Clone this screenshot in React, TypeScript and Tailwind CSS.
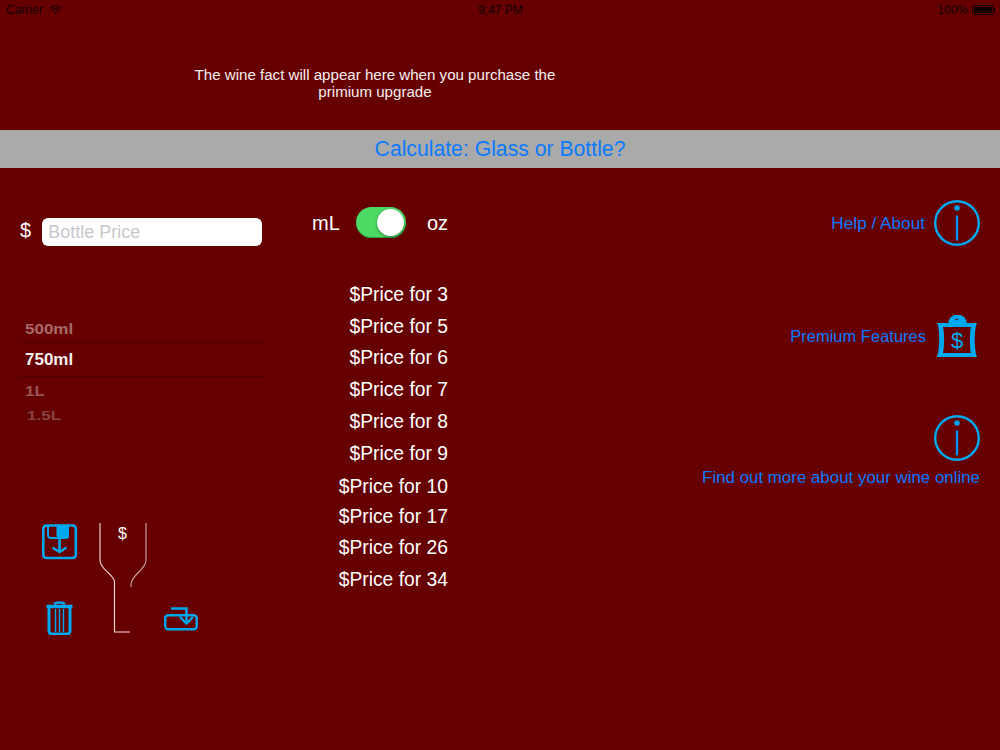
import { useState } from 'react';

const priceRows = [
  { label: '$Price for 3', height: 'h-[32px]' },
  { label: '$Price for 5', height: 'h-[32px]' },
  { label: '$Price for 6', height: 'h-[31px]' },
  { label: '$Price for 7', height: 'h-[32px]' },
  { label: '$Price for 8', height: 'h-[32px]' },
  { label: '$Price for 9', height: 'h-[33px]' },
  { label: '$Price for 10', height: 'h-[32px]' },
  { label: '$Price for 17', height: 'h-[29px]' },
  { label: '$Price for 26', height: 'h-[32px]' },
  { label: '$Price for 34', height: 'h-[33px]' },
];

const WifiIcon = () => (
  <svg width="13" height="10" viewBox="0 0 13 10" fill="none" stroke="#120000" strokeWidth="1.4">
    <path d="M0.8 3.4a8.2 8.2 0 0 1 11.4 0" />
    <path d="M2.9 5.5a5.2 5.2 0 0 1 7.2 0" />
    <path d="M6.5 9.4 4.9 7.5a2.4 2.4 0 0 1 3.2 0z" fill="#120000" stroke="none" />
  </svg>
);

const InfoIcon = () => (
  <svg width="46" height="46" viewBox="0 0 46 46" fill="none" stroke="#00a9ef" strokeWidth="2.4">
    <circle cx="23" cy="23" r="21.8" />
    <circle cx="23" cy="8" r="2.8" fill="#00a0ef" stroke="none" />
    <path d="M23 15.500v25" stroke="#0090ef" strokeWidth="2.400" />
  </svg>
);

const PremiumIcon = () => (
  <svg width="40" height="43" viewBox="0 0 40 43" fill="none">
    <path d="M11 9a9.500 9.500 0 0 1 19 0z" fill="#00a9ef" />
    <path d="M18 5l3-1" stroke="#660000" strokeWidth="1" />
    <path
      fillRule="evenodd"
      d="M0 8h40c-3 6-3 26 0 34H0c3-8 3-28 0-34zm6 4c1.500 6 1.500 20 0 26h28c-1.500-6-1.500-20 0-26z"
      fill="#00a9ef"
    />
    <text x="20" y="33" textAnchor="middle" fill="#00a9ef" fontSize="22" fontFamily="Liberation Sans, sans-serif">
      $
    </text>
  </svg>
);

const SaveIcon = () => (
  <svg width="36" height="36" viewBox="0 0 36 36" fill="none" stroke="#00a9ef" strokeWidth="2.6">
    <rect x="1.300" y="1.500" width="32.500" height="32.500" rx="3" />
    <path d="M6 2v9a3 3 0 0 0 3 3h15a2 2 0 0 0 2-2V2" strokeWidth="2" />
    <path d="M14.500 2h11.500v10a1.500 1.500 0 0 1-1.500 1.500H16.500a2 2 0 0 1-2-2z" fill="#00a9ef" stroke="none" />
    <path d="M17.500 14v14M10.500 23.500l7 4.500 7-4.500" />
  </svg>
);

const TrashIcon = () => (
  <svg width="27" height="34" viewBox="0 0 27 34" fill="none" stroke="#00a9ef">
    <path d="M0.500 5.500h26" strokeWidth="3.500" />
    <path d="M8 3c2-2 9-2 11 0" strokeWidth="2.600" />
    <path d="M3 7v23a3 3 0 0 0 3 3h15a3 3 0 0 0 3-3V7" strokeWidth="3" />
    <path d="M9.500 8v23M13.500 8v23M17.500 8v23" strokeWidth="1.400" />
  </svg>
);

const TrayIcon = () => (
  <svg width="34" height="25" viewBox="0 0 34 25" fill="none" stroke="#00a9ef" strokeWidth="2.400">
    <rect x="1.200" y="9.200" width="31.500" height="14" rx="3" />
    <path d="M7 2.500h15.500v14" />
    <path d="M16 11l6.500 6.500 6.500-6.500" />
  </svg>
);

const GlassOutline = () => (
  <svg width="50" height="110" viewBox="0 0 50 110" fill="none" stroke="#f3dede" strokeWidth="1.100">
    <path d="M1 0v37c0 10 14 14 14.500 22v50H31" />
    <path d="M47 0v37c0 10-14 14-15 24v3" strokeOpacity="0.75" />
  </svg>
);

export default function App() {
  const [useOz, setUseOz] = useState(true);

  return (
    <div className="w-[1000px] h-[750px] overflow-hidden bg-[#660000] font-['Liberation_Sans',sans-serif]">
      {/* status bar */}
      <div className="h-5 pl-[6px] pr-[5px] grid grid-cols-3 items-center text-[12px] text-[#120000]">
        <div className="flex items-center gap-[6px]">
          <span>Carrier</span>
          <WifiIcon />
        </div>
        <div className="text-center">9:47 PM</div>
        <div className="flex items-center justify-end gap-[4px]">
          <span>100%</span>
          <div className="flex items-center">
            <div className="w-[22px] h-[10px] border border-[#120000] rounded-[2px] p-[1px]">
              <div className="w-full h-full bg-[#120000]" />
            </div>
            <div className="w-[1px] h-[4px] bg-[#120000]" />
          </div>
        </div>
      </div>

      {/* wine fact */}
      <div className="w-[750px] h-[110px] pt-[46px] text-center text-[15.100px] leading-[17px] text-[#f7eeee]">
        <p>The wine fact will appear here when you purchase the</p>
        <p>primium upgrade</p>
      </div>

      <div className="h-[38px] bg-[#aaaaaa] flex items-center justify-center text-[21.200px] text-[#0a7aff]">
        Calculate: Glass or Bottle?
      </div>

      <div className="flex">
        {/* left column */}
        <div className="w-[300px]">
          <div className="pt-[50px] pl-5 flex items-center gap-[11px]">
            <span className="text-[20px] leading-none text-white pb-[5px]">$</span>
            <input
              placeholder="Bottle Price"
              className="w-[220px] h-[28px] rounded-[6px] bg-white px-[6px] text-[18px] outline-none placeholder:text-[#c7c7cd]"
            />
          </div>

          <div className="mt-[71px] pl-[25px] w-[263px] font-bold text-[17px]">
            <div className="h-[25px] leading-[21px] text-[#a86a6a] scale-y-90 origin-bottom">500ml</div>
            <div className="h-[35px] leading-[33px] -ml-[5px] pl-[5px] border-y border-[#4a0000] text-[#f6eeee]">750ml</div>
            <div className="h-[29px] leading-[29px] text-[#9a5555] scale-y-90">1L</div>
            <div className="h-[20px] leading-[20px] pl-[2px] text-[#8a4242] scale-y-75">1.5L</div>
          </div>

          <div className="mt-[97px] pl-[42px] flex items-start">
            <div className="w-[57px] flex flex-col pt-[1px]">
              <SaveIcon />
              <div className="mt-[41px] pl-1">
                <TrashIcon />
              </div>
            </div>
            <div className="relative w-[65px]">
              <GlassOutline />
              <span className="absolute left-[19px] top-[-1px] text-[16px] text-white">$</span>
            </div>
            <div className="pt-[83px]">
              <TrayIcon />
            </div>
          </div>
        </div>

        {/* middle column */}
        <div className="w-[148px]">
          <div className="pt-[39px] pl-[12px] flex items-center text-[20px] text-white">
            <span>mL</span>
            <button
              onClick={() => setUseOz(!useOz)}
              className="ml-[16px] mr-[21px] w-[51px] h-[31px] rounded-full bg-[#4cd964] p-[2px] flex justify-end shadow-[inset_0_-1px_0_#2f9a44]"
            >
              <span className="w-[27px] h-[27px] rounded-full bg-white shadow-[0_1px_3px_rgba(0,0,0,0.4)]" />
            </button>
            <span>oz</span>
          </div>
          <div className="mt-[41px] flex flex-col items-end text-[19.300px] text-white">
            {priceRows.map((row) => (
              <div key={row.label} className={`${row.height} flex items-center whitespace-nowrap`}>
                {row.label}
              </div>
            ))}
          </div>
        </div>

        {/* right column */}
        <div className="flex-1 pr-5 flex flex-col items-end text-[#0a7aff] text-[16.500px]">
          <div className="pt-[32px] flex items-center gap-[9px]">
            <span className="text-[17.200px] pt-[2px]">Help / About</span>
            <InfoIcon />
          </div>
          <div className="mt-[69px] pr-[3px] flex items-center gap-[11px]">
            <span>Premium Features</span>
            <PremiumIcon />
          </div>
          <div className="mt-[57px]">
            <InfoIcon />
          </div>
          <div className="mt-[4px] text-[16.900px]">Find out more about your wine online</div>
        </div>
      </div>
    </div>
  );
}
